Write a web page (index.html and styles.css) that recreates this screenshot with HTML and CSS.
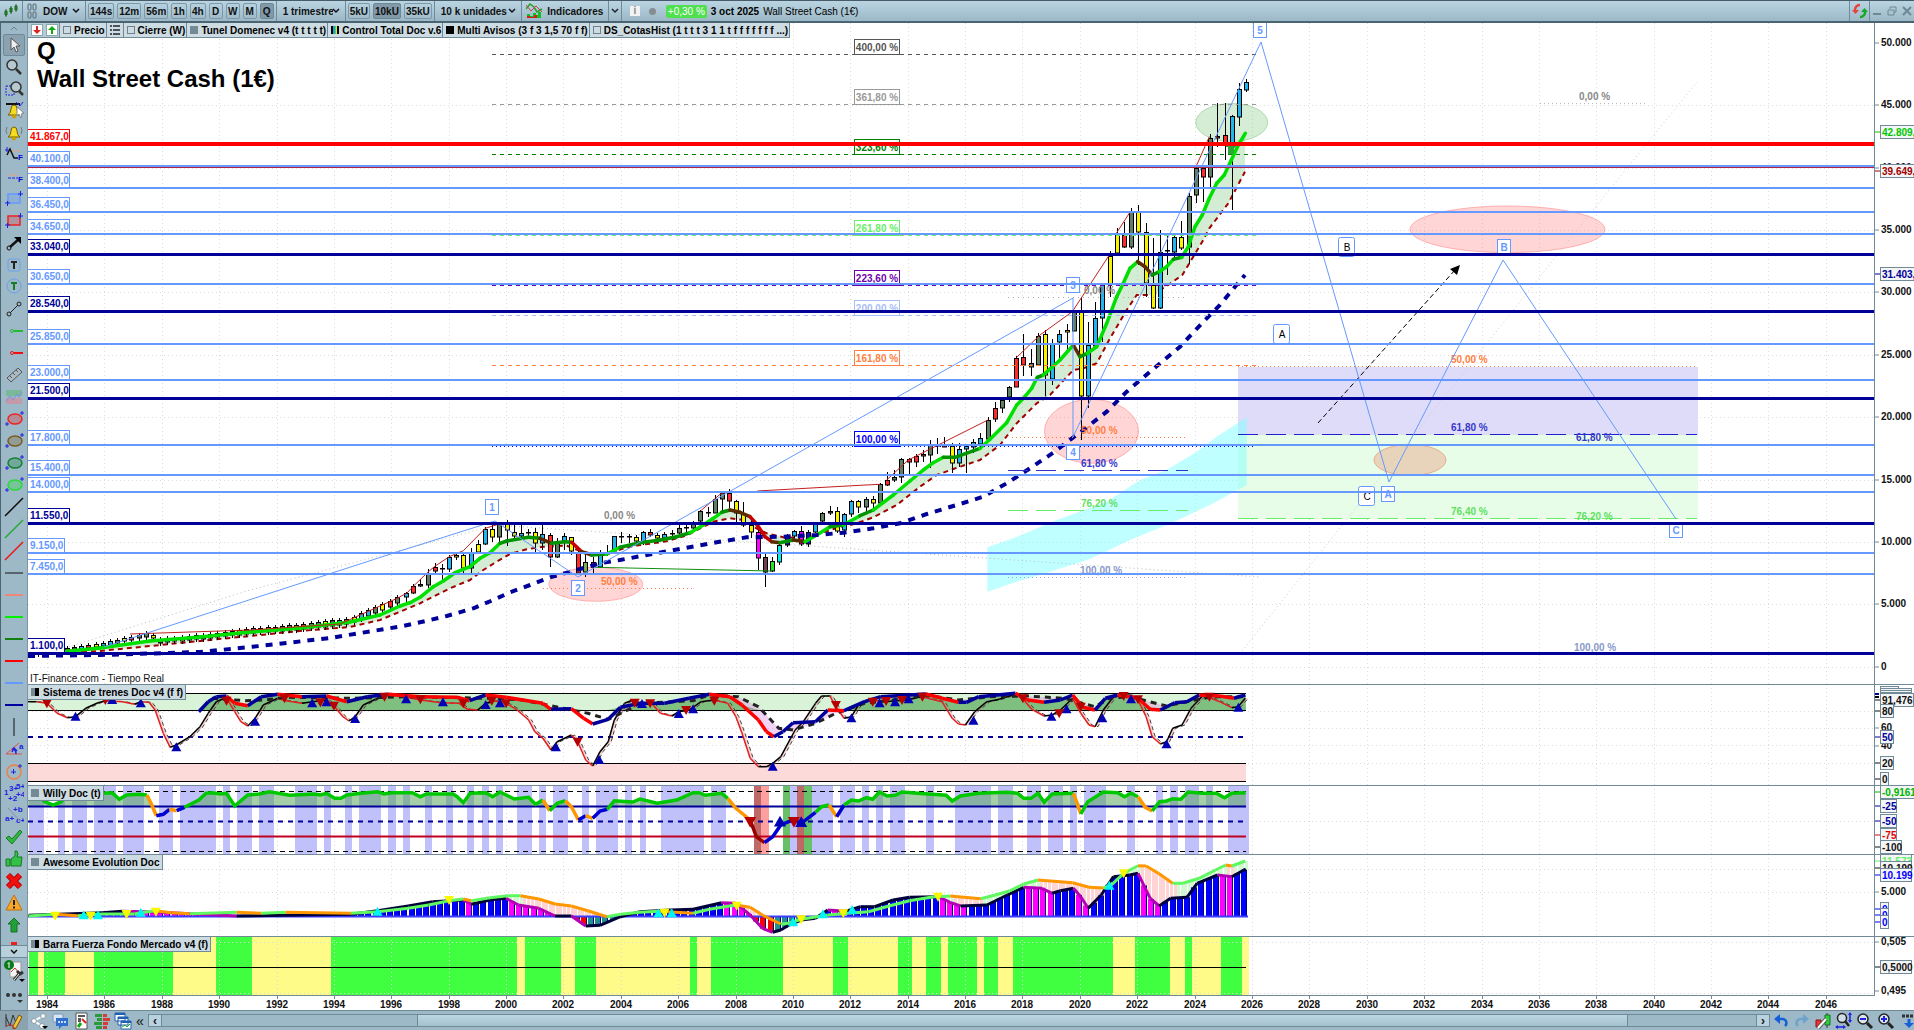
FILE: index.html
```html
<!DOCTYPE html>
<html lang="es">
<head>
    <meta charset="UTF-8">
    <meta name="viewport" content="width=device-width, initial-scale=1.0">
    <title>Wall Street Cash (1€)</title>
    <link rel="stylesheet" href="styles.css">
</head>
<body>

    <!-- Top bar -->
    <header class="topbar">
        <div class="cell logo">
            <svg width="18" height="18" viewBox="0 0 18 18"><path d="M4 7v8M9 4v8M14 2v8" stroke="#2a7a2a"/><path d="M3 9h2v4H3zM8 6h2v4H8zM13 4h2v4h-2z" fill="#2a9a2a" stroke="#186018"/></svg>
        </div>
        <div class="cell link">
            <svg width="10" height="16" viewBox="0 0 10 16" fill="none" stroke="#718894" stroke-width="1.5"><rect x="1" y="1" width="3" height="6" rx="1.5"/><rect x="6" y="1" width="3" height="6" rx="1.5"/><rect x="1" y="9" width="3" height="6" rx="1.5"/><rect x="6" y="9" width="3" height="6" rx="1.5"/></svg>
        </div>
        <div class="cell symbol">
            <select aria-label="Valor"><option>DOW</option></select>
        </div>
        <div class="cell frames">
            <button>144s</button>
            <button>12m</button>
            <button>56m</button>
            <button>1h</button>
            <button>4h</button>
            <button>D</button>
            <button>W</button>
            <button>M</button>
            <button class="active">Q</button>
        </div>
        <div class="cell period">
            <select aria-label="Periodo"><option>1 trimestre</option></select>
        </div>
        <div class="cell frames">
            <button>5kU</button>
            <button class="active">10kU</button>
            <button>35kU</button>
        </div>
        <div class="cell units">
            <select aria-label="Unidades"><option>10 k unidades</option></select>
        </div>
        <button class="cell indicators">
            <svg width="17" height="16" viewBox="0 0 17 16"><path d="M0 6L4 1l4 3 3 5 5-3" fill="none" stroke="#2aa02a" stroke-width="1.5"/><path d="M0 2l5 6 5-5 6 6" fill="none" stroke="#c44" stroke-width="1"/><path d="M1 15v-4h3v2h3v-3h3v2h2v-3h3v6z" fill="#10c020"/><path d="M1 15v-2h3v1h4v-2h3v3z" fill="#d02020"/></svg>
            Indicadores
        </button>
        <button class="cell more" aria-label="Más indicadores">
            <svg width="8" height="6" viewBox="0 0 8 6"><path d="M1 1l3 3 3-3" fill="none" stroke="#223" stroke-width="1.5"/></svg>
        </button>
        <div class="quote">
            <span class="info">i</span>
            <span class="dot"></span>
            <span class="change">+0,30 %</span>
            <strong>3 oct 2025</strong>
            <span>Wall Street Cash (1€)</span>
        </div>
        <button class="cell refresh" aria-label="Actualizar">
            <svg width="16" height="16" viewBox="0 0 16 16" fill="none" stroke-width="2.5"><path d="M8 2a5 5 0 0 0-5 6" stroke="#e8403c"/><path d="M0 7h7l-3.500 4z" fill="#e8403c"/><path d="M8 14a5 5 0 0 0 5-6" stroke="#18a828"/><path d="M9 9h7l-3.500-4z" fill="#18a828"/></svg>
        </button>
        <div class="window-buttons">
            <button aria-label="Minimizar"><svg width="10" height="10" viewBox="0 0 10 10"><path d="M1 8h8" stroke="#708894" stroke-width="2"/></svg></button>
            <button aria-label="Restaurar"><svg width="10" height="10" viewBox="0 0 10 10" fill="none" stroke="#708894"><path d="M3 3V1h6v5H7M1 4h6v5H1z"/></svg></button>
            <button aria-label="Cerrar"><svg width="10" height="10" viewBox="0 0 10 10"><path d="M1 1l8 8M9 1L1 9" stroke="#708894" stroke-width="2"/></svg></button>
        </div>
    </header>

    <div class="workspace">

        <!-- Drawing tools -->
        <nav class="sidebar" aria-label="Herramientas">
            <button class="scroll-up" aria-label="Subir"><svg width="8" height="5" viewBox="0 0 8 5"><path d="M1 4l3-3 3 3" fill="none" stroke="#6a8290"/></svg></button>
            <div class="tools" id="tools"></div>
            <button class="scroll-down" aria-label="Bajar"><svg width="8" height="5" viewBox="0 0 8 5"><path d="M1 1l3 3 3-3" fill="none" stroke="#111" stroke-width="1.500"/></svg></button>
            <button class="side-big" aria-label="Ajustes"><svg width="24" height="24" viewBox="0 0 24 24"><rect x="8" y="3" width="11" height="15" fill="#f4f4f4" stroke="#999"/><path d="M9 13l4-4 4 5" stroke="#c33" fill="none"/><path d="M12 21l5-6m-2-3 3 3 3-2" stroke="#333" stroke-width="3" fill="none"/><path d="M12 21l5-6" stroke="#eee"/><circle cx="7" cy="6" r="5" fill="#0a7a1a"/><path d="M5.500 5L7 3.500V9" stroke="#fff" fill="none"/><path d="M17 20h6l-3 3z"/></svg></button>
            <button class="side-big" aria-label="Más"><svg width="24" height="24" viewBox="0 0 24 24" fill="#333"><circle cx="6" cy="10" r="2"/><circle cx="12" cy="10" r="2"/><circle cx="18" cy="10" r="2"/><path d="M15 15h6l-3 3z"/></svg></button>
        </nav>

        <!-- Charts -->
        <main class="charts">
            <section class="pane">
                <ul class="legend">
                    <li class="arrows">
                        <svg width="12" height="12" viewBox="0 0 12 12"><rect x=".5" y=".5" width="11" height="11" fill="#fff" stroke="#8aa"/><path d="M6 2v4" stroke="#d22" stroke-width="2"/><path d="M2 6h8l-4 4z" fill="#d22"/></svg>
                        <svg width="12" height="12" viewBox="0 0 12 12"><rect x=".5" y=".5" width="11" height="11" fill="#fff" stroke="#8aa"/><path d="M6 10V6" stroke="#1a1" stroke-width="2"/><path d="M2 6h8L6 2z" fill="#1a1"/></svg>
                    </li>
                    <li><i class="swatch"></i>Precio</li>
                    <li class="list"><svg width="10" height="10" viewBox="0 0 10 10"><path d="M0 1h2M0 5h2M0 9h2M3 1h7M3 5h7M3 9h7" stroke="#223" stroke-width="1.500"/></svg></li>
                    <li><i class="swatch"></i>Cierre (W)</li>
                    <li><i class="swatch solid"></i>Tunel Domenec v4 (t t t t t)</li>
                    <li><i class="swatch stripes"></i>Control Total Doc v.6</li>
                    <li><i class="swatch black"></i>Multi Avisos (3 f 3 1,5 70 f f)</li>
                    <li><i class="swatch"></i>DS_CotasHist (1 t t t 3 1 1 t f f f f f f f ...)</li>
                </ul>
                <svg id="price" class="plot" viewBox="28 23 1886 661"></svg>
            </section>
            <section class="pane">
                <h2 class="tag"><i class="swatch half"></i>Sistema de trenes Doc v4 (f f)</h2>
                <svg id="trains" class="plot" viewBox="28 684 1886 101"></svg>
            </section>
            <section class="pane">
                <h2 class="tag"><i class="swatch solid"></i>Willy Doc (t)</h2>
                <svg id="willy" class="plot" viewBox="28 785 1886 69"></svg>
            </section>
            <section class="pane">
                <h2 class="tag"><i class="swatch solid"></i>Awesome Evolution Doc</h2>
                <svg id="awesome" class="plot" viewBox="28 854 1886 82"></svg>
            </section>
            <section class="pane">
                <h2 class="tag"><i class="swatch half"></i>Barra Fuerza Fondo Mercado v4 (f)</h2>
                <svg id="force" class="plot" viewBox="28 936 1886 74"></svg>
            </section>
        </main>
    </div>

    <!-- Bottom bar -->
    <footer class="bottombar">
        <button class="draw" aria-label="Dibujar"><svg width="20" height="18" viewBox="0 0 20 18"><path d="M2 2v13M2 5l4 9 3-11 3 8" stroke="#333" fill="none"/><path d="M9 14l6-11 3 2-6 11-3 1z" fill="#f2c53a" stroke="#7a5010"/><path d="M3 14q4-4 8 3" stroke="#c22" fill="none"/></svg></button>
        <button aria-label="Compartir"><svg width="18" height="18" viewBox="0 0 18 18"><path d="M13 4L4 9l8 5" stroke="#fff" stroke-width="2" fill="none"/><g fill="#fff" stroke="#8b9aa2"><circle cx="13" cy="4" r="2.500"/><circle cx="4" cy="9" r="2.500"/><circle cx="12" cy="14" r="2.500"/></g><path d="M12 14h6l-3 3z"/></svg></button>
        <button aria-label="Chat"><svg width="18" height="18" viewBox="0 0 18 18"><rect x="2" y="2" width="10" height="8" rx="1" fill="#d6e4f4" stroke="#7892bb"/><path d="M5 6h12v8h-6l-3 3v-3H5z" fill="#2f6fd0"/><path d="M7 10h2m1 0h2m1 0h2" stroke="#fff" stroke-width="1.500"/></svg></button>
        <button aria-label="Informe"><svg width="18" height="18" viewBox="0 0 18 18"><path d="M4 1h11v16H4z" fill="#fff" stroke="#555"/><path d="M6 4h7M6 7h3M6 9h3" stroke="#222" stroke-width="1.500"/><path d="M10 7l4 4" stroke="#d22" stroke-width="2"/><path d="M6 15l3-4" stroke="#1a1" stroke-width="3"/></svg></button>
        <button aria-label="Órdenes"><svg width="18" height="18" viewBox="0 0 18 18"><path d="M2 2h7v3H2zM4 6h5v3H4zM1 10h8v3H1zM3 14h6v3H3z" fill="#2a9a3a"/><path d="M10 2h4v3h-4zM10 6h7v3h-7zM10 10h5v3h-5zM10 14h4v3h-4z" fill="#d43c34"/></svg></button>
        <button aria-label="Ventanas"><svg width="18" height="18" viewBox="0 0 18 18" stroke="#2060b0"><path d="M1 1h10v8H1zM4 5h10v8H4zM7 9h10v8H7z" fill="#fff"/><path d="M1 2h10M4 6h10M7 10h10" stroke-width="2"/><path d="M8 15l3-2 2 2 3-3" stroke="#2a2" fill="none"/></svg></button>
        <button class="collapse" aria-label="Plegar">«</button>
        <div class="scrollbar">
            <button aria-label="Izquierda">‹</button>
            <div class="track"><div class="thumb"></div></div>
            <button aria-label="Derecha">›</button>
        </div>
        <div class="zoom">
            <button aria-label="Deshacer"><svg width="16" height="16" viewBox="0 0 16 16"><path d="M5 6h5a4 4 0 0 1 2 7" stroke="#1560d8" stroke-width="2.500" fill="none"/><path d="M7 1v10L1 6z" fill="#1560d8"/></svg></button>
            <button aria-label="Rehacer"><svg width="16" height="16" viewBox="0 0 16 16"><path d="M11 6H6a4 4 0 0 0-2 7" stroke="#6fa3cc" stroke-width="2.500" fill="none"/><path d="M9 1v10l6-5z" fill="#6fa3cc"/></svg></button>
            <button aria-label="Configurar"><svg width="18" height="18" viewBox="0 0 18 18"><path d="M5 8v7M13 1v15" stroke="#333"/><path d="M11 3h5v10h-5z" fill="#2ad040" stroke="#187020"/><path d="M2 8h5v7H2z" fill="#e33" stroke="#811"/><path d="M4 16l8-9" stroke="#555" stroke-width="4"/><path d="M4 16l8-9" stroke="#fff" stroke-width="2"/></svg></button>
            <button aria-label="Zoom libre"><svg width="18" height="18" viewBox="0 0 18 18"><circle cx="7" cy="6" r="4.500" fill="#cfdde4" stroke="#222" stroke-width="1.500"/><path d="M10 9l4 5" stroke="#222" stroke-width="2.500"/><path d="M15 1v9M1 15h9" stroke="#22d" stroke-width="1.500"/><path d="M13 3l2-3 2 3zM13 8l2 3 2-3zM3 13l-3 2 3 2zM8 13l3 2-3 2z" fill="#22d"/></svg></button>
            <button aria-label="Alejar"><svg width="18" height="18" viewBox="0 0 18 18"><circle cx="7" cy="7" r="5" fill="#dce6ea" stroke="#222" stroke-width="1.500"/><path d="M11 11l5 5" stroke="#222" stroke-width="3"/><path d="M4 7h6" stroke="#22d" stroke-width="2"/></svg></button>
            <button aria-label="Acercar"><svg width="18" height="18" viewBox="0 0 18 18"><circle cx="7" cy="7" r="5" fill="#dce6ea" stroke="#222" stroke-width="1.500"/><path d="M11 11l5 5" stroke="#222" stroke-width="3"/><path d="M4 7h6M7 4v6" stroke="#22d" stroke-width="2"/></svg></button>
            <button aria-label="Mostrar"><svg width="18" height="18" viewBox="0 0 18 18"><path d="M4 4h14" stroke="#333" stroke-width="3" stroke-dasharray="3 1"/><path d="M11 7v5" stroke="#1560d8" stroke-width="3"/><path d="M6 11h10l-5 5z" fill="#1560d8"/></svg></button>
        </div>
    </footer>

    <script src="chart.js"></script>
</body>
</html>
```
FILE: styles.css
```css
* {
    box-sizing: border-box;
}

body {
    margin: 0;
    min-height: 100vh;
    display: flex;
    flex-direction: column;
    font-family: "Liberation Sans", Arial, sans-serif;
    font-size: 10px;
    color: #000;
    background: #9db9c7;
}

button, select {
    font: inherit;
    font-weight: bold;
    color: #111;
    background: none;
    border: 0;
    padding: 0;
    margin: 0;
}

svg {
    display: block;
    flex: none;
}

/* top bar */
.topbar {
    display: flex;
    height: 23px;
    border-top: 1px solid #465c6a;
    border-bottom: 2px solid #4a6472;
    background: linear-gradient(#bad4e2, #9cb8c6);
}

.cell {
    display: flex;
    align-items: center;
    justify-content: center;
    border-right: 1px solid #708c9a;
}

.logo {
    width: 23px;
}

.link {
    width: 17px;
    border-right: 0;
}

.symbol {
    width: 46px;
}

.period {
    width: 69px;
}

.units {
    width: 87px;
}

.cell select {
    width: 100%;
    padding: 0 12px 0 3px;
    appearance: none;
    background: url("data:image/svg+xml,%3Csvg xmlns='http://www.w3.org/2000/svg' width='8' height='6'%3E%3Cpath d='M1 1l3 3 3-3' fill='none' stroke='%23112' stroke-width='1.5'/%3E%3C/svg%3E") no-repeat right 5px center;
}

.period select, .units select {
    padding-left: 6px;
}

.frames {
    gap: 3px;
    padding: 0 2px;
}

.frames button {
    height: 16px;
    min-width: 14px;
    padding: 0 1px;
    border: 1px solid #7d98a6;
    border-radius: 2px;
}

.frames .active {
    background: #8199a8;
    border-color: #6d8794;
}

.indicators {
    width: 87px;
    gap: 4px;
}

.more {
    width: 13px;
}

.quote {
    flex: 1;
    display: flex;
    align-items: center;
    gap: 4px;
    padding-left: 8px;
}

.info {
    width: 10px;
    height: 10px;
    line-height: 10px;
    text-align: center;
    font-weight: bold;
    color: #8a8a8a;
    background: #f2f2f2;
}

.dot {
    width: 7px;
    height: 7px;
    margin: 0 6px 0 5px;
    border-radius: 50%;
    background: #858d92;
}

.change {
    padding: 0 2px;
    line-height: 13px;
    border-radius: 2px;
    color: #fff;
    background: #4fdf4f;
}

.refresh {
    width: 21px;
    border-left: 1px solid #708c9a;
}

.window-buttons {
    width: 44px;
    display: flex;
    align-items: center;
    justify-content: space-around;
}

/* side bar */
.workspace {
    display: flex;
    flex: 1;
    align-items: stretch;
}

.sidebar {
    width: 28px;
    flex: none;
    display: flex;
    flex-direction: column;
    background: #9db9c7;
    border-left: 1px solid #4a6472;
    border-right: 1px solid #7c96a4;
}

.sidebar button {
    display: flex;
    align-items: center;
    justify-content: center;
}

.scroll-up {
    height: 11px;
}

.tools {
    flex: 1 1 0;
    overflow: hidden;
    display: flex;
    flex-direction: column;
}

.tools button {
    flex: none;
    height: 22px;
    margin: 0 2px;
    border-radius: 2px;
}

.tools button:first-child {
    background: #8ba3b1;
    border: 1px solid #6f8997;
}

.scroll-down {
    height: 13px;
    border-top: 1px solid #6f8997;
    border-bottom: 1px solid #6f8997;
    background: #b8d0dc;
}

.sidebar .side-big {
    height: 26px;
}

/* charts */
.charts {
    flex: 1;
    min-width: 0;
    background: #fff;
}

.pane {
    position: relative;
}

.plot {
    width: 100%;
    height: auto;
}

.plot text {
    font-size: 10px;
    font-weight: bold;
}

.plot .title {
    font-size: 24px;
}

.plot .plain {
    font-weight: normal;
}

.legend {
    position: absolute;
    top: 0;
    left: 0;
    display: flex;
    margin: 0;
    padding: 0;
    list-style: none;
    border-bottom: 1px solid #708a98;
}

.legend li {
    display: flex;
    align-items: center;
    height: 14px;
    gap: 3px;
    padding: 0 1px 0 3px;
    font-weight: bold;
    white-space: nowrap;
    border-right: 1px solid #708a98;
    background: #cddbe2;
}

.legend .arrows {
    background: #b5cbd6;
}

.legend .list {
    padding: 0 3px;
}

.swatch {
    width: 8px;
    height: 8px;
    border: 1px solid #708090;
}

.swatch.solid {
    background: #748b96;
    border-color: #748b96;
}

.swatch.black {
    background: #000;
    border-color: #000;
}

.swatch.half {
    border: 0;
    background: linear-gradient(90deg, #748b96 50%, #000 50%);
}

.swatch.stripes {
    border: 0;
    background: linear-gradient(90deg, #000 25%, #29d 25% 50%, #4d4 50% 65%, #ee0 65% 80%, #000 80%);
}

.tag {
    position: absolute;
    top: 0;
    left: 0;
    display: flex;
    align-items: center;
    gap: 4px;
    height: 16px;
    margin: 0;
    padding: 0 2px 0 3px;
    font-size: 10px;
    background: #cddbe2;
    border: 1px solid #708a98;
    border-left: 0;
}

/* bottom bar */
.bottombar {
    display: flex;
    align-items: stretch;
    height: 20px;
    border-top: 1px solid #6f8997;
    background: #9db9c7;
}

.bottombar button {
    display: flex;
    width: 21px;
    align-items: center;
    justify-content: center;
}

.bottombar .draw {
    width: 28px;
    background: #8ba3b1;
}

.bottombar .collapse {
    width: 14px;
    font-size: 14px;
    font-weight: normal;
}

.scrollbar {
    flex: 1;
    display: flex;
    margin: 3px 0 3px 1px;
    border: 1px solid #6f8997;
}

.scrollbar button {
    width: 12px;
    background: #b8d2df;
    font-size: 12px;
}

.track {
    flex: 1;
    display: flex;
    border: 1px solid #6f8997;
    border-width: 0 1px;
}

.thumb {
    width: 76%;
    margin-left: 16%;
    background: linear-gradient(#bcd6e2, #a5c1ce);
    border: 1px solid #6f8997;
    border-width: 0 1px;
}

.zoom {
    width: 144px;
    display: flex;
    overflow: hidden;
}

.zoom button {
    flex: none;
}
```
FILE: chart.js
```js
const RIGHT = 1875;      // x of the price axis
const LAST = 1246;       // x of the last bar
const NAVY = '#000099';
const SKY = '#6699ff';
const GRID = '#dcdcdc';

const yearX = y => 47 + 28.69 * (y - 1984);
const priceY = p => 666.8 - p * 0.01248;

// readers for the point lists: each frame has its own origin and units
function frame(ox, oy, sx, sy) {
    return s => s.trim().split(/\s+/).map(p => {
        const [x, y] = p.split(',').map(Number);
        return [Math.round((ox + x / sx) * 10) / 10, Math.round((oy + y / sy) * 10) / 10];
    });
}
const early = frame(0, 0, 1, 1);
const mid = frame(400, 380, 3, 3);
const late = frame(840, 320, 3, 3);
const top3 = frame(840, 20, 3, 3);
const lo = frame(0, 670, 2.45, 3);
const hi = frame(640, 670, 2.45, 3);

const line = (x1, y1, x2, y2, c, w = 1, dash = '') =>
    `<line x1="${x1}" y1="${y1}" x2="${x2}" y2="${y2}" stroke="${c}" stroke-width="${w}"${dash ? ` stroke-dasharray="${dash}"` : ''}/>`;
const rect = (x, y, w, h, fill, stroke = 'none', rx = 0) =>
    `<rect x="${x}" y="${y}" width="${w}" height="${h}" fill="${fill}" stroke="${stroke}" rx="${rx}"/>`;
const poly = (pts, c, w = 1, dash = '') =>
    `<polyline points="${pts.join(' ')}" fill="none" stroke="${c}" stroke-width="${w}"${dash ? ` stroke-dasharray="${dash}"` : ''}/>`;
const area = (pts, fill) => `<polygon points="${pts.join(' ')}" fill="${fill}"/>`;
const text = (x, y, s, c = '#111', cls = '', anchor = 'start') =>
    `<text x="${x}" y="${y}" fill="${c}" class="${cls}" text-anchor="${anchor}">${s}</text>`;
const ellipse = (cx, cy, rx, ry, c) =>
    `<ellipse cx="${cx}" cy="${cy}" rx="${rx}" ry="${ry}" fill="${c}" fill-opacity=".35" stroke="${c}" stroke-opacity=".6"/>`;

function triangles(pts, up, c, r = 5) {
    const d = up ? -r : r;
    return pts.map(([x, y]) => area([[x - r, y - d * 0.8], [x + r, y - d * 0.8], [x, y + d]], c)).join('');
}

// a line whose colour depends on the direction of each step
function turning(pts, rising, falling, w) {
    let out = '';
    for (let i = 1; i < pts.length; i++) {
        out += poly([pts[i - 1], pts[i]], pts[i][1] > pts[i - 1][1] ? falling : rising, w);
    }
    return out;
}

function valueAt(pts, x) {
    for (let i = 1; i < pts.length; i++) {
        if (x <= pts[i][0]) {
            const [a, b] = [pts[i - 1], pts[i]];
            return a[1] + (b[1] - a[1]) * (x - a[0]) / (b[0] - a[0] || 1);
        }
    }
    return pts[pts.length - 1][1];
}

function grid(y1, y2, rows) {
    let out = '';
    for (let y = 1984; y <= 2046; y += 2) out += line(Math.round(yearX(y)) + 0.5, y1, Math.round(yearX(y)) + 0.5, y2, GRID, 1, '1 3');
    rows.forEach(r => out += line(28, r + 0.5, RIGHT, r + 0.5, GRID, 1, '1 3'));
    return out;
}

function axisTag(y, s, c, w, h = 13) {
    return line(RIGHT, y, RIGHT + 5, y, c, 1) + rect(RIGHT + 5.5, Math.round(y) - 6.5, w, h, '#f4f5f6', '#708a98') + text(RIGHT + 7, Math.round(y) + 4, s, c);
}
const axisText = (y, s) => line(RIGHT, y, RIGHT + 4, y, '#708a98') + text(RIGHT + 6, y + 3, s);
const axis = (y1, y2) => line(RIGHT - 0.5, y1, RIGHT - 0.5, y2, '#708a98') + line(28, y1 + 0.5, 1914, y1 + 0.5, '#708a98');

/* ---------- price ---------- */

const candleColors = {
    b: '#22b4ee', y: '#f8f400', r: '#ff2a2a', g: '#5f7f63', k: '#555', m: '#ff00ff',
    n: '#1414b4', c: '#00f0f0', l: '#20e820', w: '#70404e', G: '#78b04c'
};
// high, top, bottom, low, colour: one row per quarter
const candles1 = `636,640,650,668,b 612,619,640,642,r 596,612,618,622,k 568,580,614,625,g 550,562,574,578,r 552,563,565,600,k
525,532,566,575,b 520,526,532,540,y 515,526,565,585,y 505,515,565,578,b 480,493,515,520,y 440,448,493,495,b 435,448,472,485,y
430,433,472,490,g 420,430,450,497,y 435,455,468,480,y 430,460,468,475,b 448,457,460,475,k 445,457,490,520,y 435,463,490,510,b
460,466,530,560,r 475,483,530,535,g 458,469,484,510,b 470,472,514,525,y 505,515,578,580,r 520,547,577,592,G 530,547,562,585,r
510,523,560,565,b 495,515,522,527,b 467,469,514,516,b 455,468,470,490,k 462,469,471,490,k 465,470,484,490,y 452,457,486,495,b
447,457,466,470,r 460,465,474,490,y 457,463,475,478,b 450,460,463,480,k 435,445,460,465,g 430,440,443,460,k 422,430,443,455,g
390,394,424,426,g 380,395,398,410,k 345,358,398,400,g 335,340,358,395,g 328,340,364,385,r 360,364,400,425,y 365,400,436,440,y
420,436,455,475,y 450,455,533,570,m 520,532,576,620,w 530,544,574,576,l 492,495,545,555,c 463,468,496,500,n 450,454,468,480,b
438,454,492,497,m 450,457,493,500,n 425,430,457,460,b 395,400,424,426,g 378,394,400,405,k 380,394,452,460,y 398,403,450,470,b
360,363,403,410,b 360,364,380,400,y`;
const candles2 = `530,538,560,575,g 528,538,550,575,y 490,493,550,552,g 457,481,494,498,r 450,472,480,487,g 415,418,472,490,g
415,418,425,465,r 403,408,425,440,r 390,403,408,425,r 360,374,404,445,g 355,375,377,403,k 352,374,380,382,r 370,379,430,458,y
368,388,430,440,b 375,378,388,458,b 358,367,380,400,b 340,355,373,380,b 292,301,356,358,g 247,265,296,305,r 235,240,265,278,g
198,202,232,245,g 108,115,200,202,r 42,112,136,168,r 87,130,140,168,g 38,48,136,138,g 30,43,166,228,y 57,73,177,195,b
30,43,65,118,b 12,31,37,90,y -30,-25,32,34,g -65,-27,227,360,y 5,75,227,265,b -55,-5,77,88,b -110,-105,-5,65,b`;
const candles3 = `693,707,792,830,y 625,645,700,702,y 605,646,680,685,r 563,577,680,687,g 555,573,635,735,y 608,635,790,830,y
655,796,863,868,y 630,697,865,868,b 648,690,692,765,k 645,652,695,720,b 603,652,685,690,y 520,529,680,732,g 438,443,526,550,g
440,443,472,545,r 343,355,472,500,g 250,347,355,380,r 250,346,370,420,r 285,289,380,570,b 190,208,290,318,b 178,187,209,215,b`;

const average = early('28,653 60,652 100,648 150,641 200,637 250,632 300,628 350,622 380,615')
    .concat(mid(`0,678 30,668 60,652 100,620 130,603 165,578 210,560 240,535 270,518 300,490 320,483 385,472 420,475 455,490 495,485
        515,487 545,515 575,525 620,522 660,502 720,488 780,480 830,470 870,458 910,435 940,415 965,397 990,390 1020,397 1050,410
        1072,435 1095,470 1115,485 1140,488 1180,480 1215,485 1250,465 1290,440 1330,435 1380,407`))
    .concat(late(`100,570 160,525 210,483 250,450 280,428 310,412 345,412 420,385 450,358 500,308 530,255 550,235 575,205
        592,172 610,165 660,120 700,75 720,110 742,100 770,80`))
    .concat(top3(`800,910 830,830 850,790 870,745 893,725 915,740 937,765 958,755 980,740 1000,718 1025,712 1045,680 1065,620
        1087,585 1108,535 1130,490 1153,465 1174,420 1195,375 1216,340`));
const slowAverage = early('28,654 100,651 200,641 300,631 350,627 380,620')
    .concat(mid(`5,693 60,670 150,625 210,600 250,570 290,545 330,522 380,508 430,500 500,497 545,515 600,525 700,498 800,484
        860,466 940,425 990,415 1030,420 1060,440 1100,460 1150,472 1220,475 1290,450 1370,430`))
    .concat(late('100,592 170,555 240,500 290,465 340,447 420,420 480,375 530,310 590,250 630,225 700,150 730,145 770,130'))
    .concat(top3('810,955 860,870 890,825 935,825 985,795 1027,765 1045,735 1090,660 1108,625 1165,550 1215,455'));
const longAverage = early('28,656 100,655 200,652 260,646 330,638')
    .concat(mid('10,738 60,727 140,708 220,685 280,660 330,637 390,615 450,592 520,573 600,550 660,540 740,525 850,505 950,487 1040,472 1150,470 1250,465'))
    .concat(late('10,638 100,625 180,610 260,582 360,552 430,530 500,490 570,445 640,398 700,352 730,330 800,275 860,215 930,155 1020,80'))
    .concat(top3('1095,900 1140,855 1185,800 1215,765'));

function candle(x, h, t, b, l, c) {
    x = Math.round(x);
    t = Math.round(t);
    b = Math.max(Math.round(b), t + 1);
    return line(x + 0.5, Math.round(h), x + 0.5, Math.round(l), '#000') + rect(x - 1.5, t + 0.5, 4, b - t - 0.5, candleColors[c], '#000');
}

function drawCandles() {
    let out = '';
    const path = early('28,653 47,652 75,648 110,643 150,634 158,641 200,637 250,631 300,627 350,621 375,610 400,599');
    const mix = 'gybgrykbgyrb';
    let n = 0;
    for (let x = 31; x < 402; x += 7.17) {
        const y = valueAt(path, x);
        const s = 1 + x / 200;
        out += candle(x, y - s - 2, y - s, y + s, y + s + 3, mix[(n++ * 5) % 12]);
    }
    let x = 406;
    [[candles1, 380], [candles2, 320], [candles3, 20]].forEach(([rows, y0]) => {
        rows.split(/\s+/).forEach(r => {
            const v = r.split(',');
            out += candle(x, y0 + v[0] / 3, y0 + v[1] / 3, y0 + v[2] / 3, y0 + v[3] / 3, v[4]);
            x += 7.18;
        });
    });
    return out;
}

function drawAverage() {
    let out = '';
    for (let i = 1; i < average.length; i++) {
        const [a, b] = [average[i - 1], average[i]];
        const slope = (a[1] - b[1]) / (b[0] - a[0]);
        let c = slope > 0.5 || b[0] < 500 ? '#00e000' : '#009400';
        if (slope < -0.1) c = slope < -0.6 && b[0] < 900 ? '#c80000' : '#5a2a00';
        out += `<polyline points="${a} ${b}" stroke="${c}" stroke-width="3.500" stroke-linecap="round"/>`;
    }
    return out;
}

const levels = [
    [41867, '41.867,0', '#ff0000', 4], [40100, '40.100,0', SKY, 2], [38400, '38.400,0', SKY, 2], [36450, '36.450,0', SKY, 2],
    [34650, '34.650,0', SKY, 2], [33040, '33.040,0', NAVY, 3], [30650, '30.650,0', SKY, 2], [28540, '28.540,0', NAVY, 3],
    [25850, '25.850,0', SKY, 2], [23000, '23.000,0', SKY, 2], [21500, '21.500,0', NAVY, 3], [17800, '17.800,0', SKY, 2],
    [15400, '15.400,0', SKY, 2], [14000, '14.000,0', SKY, 2], [11550, '11.550,0', NAVY, 3], [9150, '9.150,0', SKY, 2],
    [7450, '7.450,0', SKY, 2], [1100, '1.100,0', NAVY, 3]
];

const fibs = [
    [54, '400,00 %', '#555'], [104, '361,80 %', '#999'], [154, '323,60 %', '#008000'], [235, '261,80 %', '#66f066'],
    [285, '223,60 %', '#7000b0'], [315, '200,00 %', '#a9bdf8'], [365, '161,80 %', '#ff8040'], [446, '100,00 %', '#0000ff']
];

function drawPrice() {
    const rows = [];
    for (let p = 0; p <= 45000; p += 5000) rows.push(Math.round(priceY(p)));
    let out = grid(23, 684, rows);

    // projected zones
    out += rect(1238, 367, 460, 68, '#dedcf8') + rect(1238, 435, 460, 84, '#e8fde8');
    out += area(late(`442,682 520,655 650,600 800,545 900,480 980,450 1070,395 1130,350 1220,292 1220,495 1120,550 1000,607
        870,660 750,717 630,755 530,785 442,815`), 'rgba(128,255,255,.5)');
    out += ellipse(595.8, 584.3, 47, 17, '#ff8888') + ellipse(1091.5, 431.3, 47, 32, '#ff8888') + ellipse(1231.7, 122.5, 36, 19, '#88c888');
    out += ellipse(1507.5, 229.3, 97.5, 23.3, '#ff8888') + ellipse(1410, 460, 36, 15.5, '#e88868');
    out += poly([[1242, 651], [1601, 200], [1697, 82]], '#ccc', 1, '1 3');
    out += poly([[495, 525], [840, 548], [1260, 577]], '#bbb', 1, '1 3') + poly([[65, 648], [250, 590], [485, 528]], '#bbb', 1, '1 3');

    // averages
    out += area(average.concat(slowAverage.slice().reverse()), 'rgba(140,205,140,.38)');
    out += poly(slowAverage, '#a00000', 2, '5 4') + drawCandles() + drawAverage();
    out += poly(longAverage, NAVY, 4, '7 7');
    out += rect(1228, 147, 6, 7, '#2aa83a') + rect(1226, 144, 10, 3, '#2aa83a');

    // tops and bottoms
    [mid('0,650 20,640 40,619 82,578 103,560 148,530 190,512 256,445 298,432'), mid('902,392 964,340 1000,335'),
        mid('1072,333 1380,316 1440,313'), late('139,481 205,420 442,301'), late('530,112 600,45 697,-25'),
        top3('697,875 808,705'), top3('829,640 871,575'), top3('1068,440 1108,350')].forEach(p => out += poly(p, '#c02020'));
    out += poly(early('130,634 250,630 340,624 400,597'), '#c02020') + poly(mid('585,562 1115,573'), '#109010');

    // fibonacci
    fibs.forEach(([y, s, c]) => {
        out += line(492, y + 0.5, 1256, y + 0.5, c, 1, c === '#0000ff' ? '1 3' : '4 4');
        out += rect(854.5, y - 14.5, 45, 15, '#fff', c) + text(877, y - 3, s, c, '', 'middle');
    });
    [[543, 692, 588, '#ff8040', '1 3'], [1008, 1185, 297, '#aaa', '1 4'], [1012, 1185, 437, '#ff8040', '1 3'], [1008, 1188, 470, '#3333cc', '20 8'],
        [1008, 1188, 510, '#66ee66', '20 8'], [1008, 1185, 577, '#9aa8e0', '1 3'], [1238, 1697, 366, '#ff8040', '1 3'],
        [1238, 1697, 434, '#2020d0', '20 8'], [1238, 1697, 518, '#66ee66', '20 8'], [1540, 1645, 103, '#bbb', '1 3'],
        [1540, 1645, 652, '#9aa8e0', '1 3']].forEach(([a, b, y, c, d]) => out += line(a, y + 0.5, b, y + 0.5, c, 1, d));
    [[604, 519, '0,00 %', '#888'], [601, 585, '50,00 %', '#ff8040'], [1084, 294, '0,00 %', '#888'], [1081, 434, '50,00 %', '#ff8040'],
        [1081, 467, '61,80 %', '#3838c8'], [1081, 507, '76,20 %', '#60e060'], [1080, 574, '100,00 %', '#8899cc'],
        [1451, 363, '50,00 %', '#ff8040'], [1451, 431, '61,80 %', '#3838c8'], [1576, 441, '61,80 %', '#3838c8'],
        [1451, 515, '76,40 %', '#60e060'], [1576, 520, '76,20 %', '#60e060'], [1579, 100, '0,00 %', '#888'],
        [1574, 651, '100,00 %', '#8899cc']].forEach(([x, y, s, c]) => out += text(x, y, s, c));

    // wave count
    [[485, 499, '1'], [571, 580, '2'], [1066, 277, '3'], [1066, 444, '4'], [1253, 22, '5'], [1381, 486, 'A'], [1497, 239, 'B'], [1669, 522, 'C']]
        .forEach(([x, y, s]) => out += rect(x + 0.5, y + 0.5, 13, 15, '#fff', SKY) + text(x + 7, y + 12, s, SKY, '', 'middle'));
    [[1273, 324, 'A'], [1338, 237, 'B'], [1358, 486, 'C']]
        .forEach(([x, y, s]) => out += rect(x + 0.5, y + 0.5, 16, 19, '#fff', SKY, 2) + text(x + 9, y + 14, s, '#000', 'plain', 'middle'));
    out += poly([[104, 647], [400, 551], [495, 521], [578, 577], [860, 418], [1073, 298], [1073, 437], [1261, 42], [1389, 482], [1503, 260], [1676, 519]], SKY);
    out += line(1318, 423, 1455, 270, '#000', 1, '5 3') + area([[1460, 265], [1450, 269], [1457, 275]], '#000');

    // levels
    levels.forEach(([p, s, c, w]) => {
        const y = Math.round(priceY(p));
        const boxW = p < 10000 ? 37 : 42;
        out += rect(27.5, y - 14.5, boxW, 14, '#fff', c) + text(30, y - 4, s, c);
        out += rect(28, y - (w >> 1), RIGHT - 28, w, c);
    });
    out += line(28, 167.5, RIGHT, 167.5, '#b02040');

    out += text(37, 59, 'Q', '#000', 'title') + text(37, 87, 'Wall Street Cash (1€)', '#000', 'title');
    out += text(30, 682, 'IT-Finance.com - Tiempo Real', '#111', 'plain');

    out += rect(RIGHT, 23, 39, 661, '#fff') + line(RIGHT - 0.5, 23, RIGHT - 0.5, 684, '#708a98');
    for (let p = 0; p <= 50; p += 5) out += axisText(Math.round(priceY(p * 1000)), p ? p + '.000' : '0');
    out += axisTag(132, '42.809,2', '#00c800', 44) + axisTag(171, '39.649,7', '#a00000', 44) + axisTag(274, '31.403,6', NAVY, 44);
    document.getElementById('price').innerHTML = out;
}

/* ---------- trains ---------- */

function drawTrains() {
    const fast = lo(`68,95 90,95 115,100 140,130 165,143 185,140 210,115 240,98 260,92 300,95 330,103 345,95 365,97 380,120 400,190
        417,232 432,225 465,200 490,170 510,130 530,95 550,85 560,95 575,125 590,155 607,168 625,145 645,105 680,85 700,92 740,100
        765,95 800,90 820,110 840,140 855,153 870,140 890,105 920,88 950,75 990,80 1030,90 1080,98 1125,100 1145,118 1170,120 1190,100
        1210,92 1240,100 1265,118 1295,150 1310,185 1330,205 1350,240 1365,215 1400,195 1415,215 1435,270 1452,288 1470,245 1490,215
        1505,150 1530,100 1550,90`)
        .concat(hi(`0,100 30,102 50,130 78,138 95,125 120,120 150,95 180,90 215,100 235,140 250,190 270,265 290,290 310,290 325,280
        345,260 380,180 400,155 430,100 445,78 465,78 480,110 500,145 518,140 535,105 560,90 600,95 650,90 690,80 740,95 765,145
        780,162 797,165 820,125 850,95 880,88 920,72 940,90 960,118 990,138 1010,135 1030,120 1060,85 1080,130 1100,165 1115,170
        1135,120 1160,80 1200,75 1220,90 1240,140 1255,200 1275,222 1290,215 1305,175 1328,165 1350,115 1380,75 1420,95 1450,113
        1465,110 1483,85`));
    const slow = lo(`487,125 510,95 530,80 555,78 575,100 607,107 640,80 680,73 740,80 800,78 850,95 900,80 950,73 1030,80 1120,82
        1150,92 1190,75 1240,82 1330,100 1350,118 1400,116 1430,145 1452,162 1490,148 1520,112`)
        .concat(hi(`0,100 60,100 120,85 170,73 220,80 250,105 290,150 310,185 328,200 350,185 375,158 430,155 460,120 500,122 550,95
        590,80 700,72 740,85 780,97 800,97 830,80 920,70 950,90 990,97 1030,90 1060,75 1085,112 1115,120 1140,85 1170,75 1220,85
        1250,118 1275,120 1310,98 1340,95 1370,75 1420,78 1455,85 1483,75`));
    const signal = lo('520,85 600,92 650,90 700,82 860,85 1000,80 1200,85 1280,90 1380,115 1440,130 1490,148 1530,125')
        .concat(hi(`0,100 130,92 170,75 240,80 290,110 340,175 375,180 430,160 480,130 550,100 620,90 700,75 780,90 860,80 950,78
        1040,85 1115,110 1150,85 1200,80 1290,108 1400,80 1480,80`));
    let out = grid(684, 785, [711, 728, 745, 763]);
    out += rect(28, 693, LAST - 28, 17, '#d8f3d8') + rect(28, 763, LAST - 28, 18, '#fddada');
    const floor = slow.map(([x, y]) => [x, Math.min(y, 710)]);
    out += area([[slow[0][0], 710], ...floor, [LAST, 710]], '#7fbf7f');
    out += area(slow.slice(23).concat(signal.slice(10).reverse()), 'rgba(220,130,220,.35)');
    [693, 710, 763, 781].forEach(y => out += line(28, y + 0.5, LAST, y + 0.5, '#000'));
    out += line(28, 737, LAST, 737, NAVY, 2, '5 5');
    out += area(fast.concat(fast.map(([x, y]) => [x + 3, y]).reverse()), 'rgba(230,120,120,.3)');
    out += poly(fast.map(([x, y]) => [x + 3, y]), '#444', 1, '4 3');
    out += turning(fast, '#000', '#e02020', 1.5) + poly(signal, '#222', 3, '6 5') + turning(slow, NAVY, '#ff0000', 3.5);
    out += triangles(lo(`185,140 275,90 345,100 432,232 625,155 765,100 800,97 870,147 995,88 1085,97 1190,105 1225,100 1362,232 1468,270`)
        .concat(hi('5,102 95,132 130,118 325,290 518,145 587,100 625,97 658,88 817,152 1008,140 1045,118 1133,145 1203,88 1290,223 1466,113')), true, '#0000b4');
    out += triangles(lo('115,100 258,90 555,92 697,85 785,97 818,107 942,80 1030,88 1135,100 1205,92 1240,100 1415,215 1555,98')
        .concat(hi('25,100 113,120 182,92 480,105 570,95 603,93 642,90 692,80 938,85 1027,130 1080,110 1185,78 1220,88 1395,80')), false, '#b40000');
    out += axis(684, 785);
    [686, 688, 690, 692].forEach((y, i) => out += rect(RIGHT + 5.5, y + 0.5, i ? 31 : 18, 10, '#f4f5f6', '#708a98'));
    out += line(RIGHT, 694, RIGHT + 4, 694, NAVY, 2) + line(RIGHT, 697, RIGHT + 4, 697, '#000', 2);
    out += axisText(728, '60') + axisText(746, '40') + axisTag(700, '91,476', '#111', 33) + axisTag(711, '80', '#111', 13);
    out += axisTag(737, '50', NAVY, 13) + axisTag(763, '20', '#111', 13) + axisTag(779, '0', '#111', 8);
    document.getElementById('trains').innerHTML = out;
}

/* ---------- willy ---------- */

function drawWilly() {
    const bands = lo(`70,108 142,159 176,213 230,284 301,353 390,424 441,530 546,563 581,617 635,671 723,777 794,811 845,862 880,933
        951,970 987,1004 1040,1056 1093,1110 1144,1161 1180,1197 1214,1231 1267,1303 1321,1338 1355,1392 1426,1443 1460,1514 1531,1548`);
    const bandsLate = hi(`0,16 51,157 174,211 367,385 421,473 490,527 544,561 578,595 612,649 701,720 772,860 877,914 948,982 1000,1036
        1053,1071 1088,1142 1193,1213 1264,1281 1298,1318 1335,1370 1387,1404 1441,1492`);
    const band = (a, b, ox, c) => rect(Math.round(ox + a / 2.45), 786, Math.round((b - a) / 2.45), 68, c);
    let out = grid(785, 854, [821]);
    // both numbers of a pair are x positions here, so undo the vertical scale
    bands.forEach(([x, y]) => out += band(x * 2.45, (y - 670) * 3, 0, '#c0c0fb'));
    bandsLate.forEach(([x, y]) => out += band((x - 640) * 2.45, (y - 670) * 3, 640, '#c0c0fb'));
    out += band(279, 296, 640, '#c06868') + band(296, 316, 640, '#ffa0a0') + band(350, 367, 640, '#68c068');
    out += band(385, 402, 640, '#c06868') + band(402, 421, 640, '#68c068');

    // runs: colour, then points
    const runs = [
        ['#00c800', lo('68,375 90,375 110,395 130,405 150,395 165,375 250,370 275,368 292,388 310,375 340,373 360,375')],
        ['#ff9800', lo('360,375 372,405 383,437')], ['#0000d0', lo('383,437 400,433 415,418')], ['#ff9800', lo('415,418 433,422')],
        ['#0000d0', lo('433,422 452,412')],
        ['#00c800', lo(`452,412 487,390 505,370 520,368 540,372 555,370 575,408 607,375 635,372 660,365 710,376 770,372 785,375 800,370
            820,385 835,385 850,375 885,370 925,365 940,372 960,368 1010,368 1030,380 1045,372 1110,372 1120,380 1135,398 1152,370
            1190,368 1207,380 1225,366 1260,387 1295,382 1312,403 1330,390`)],
        ['#ff9800', lo('1330,390 1347,422')], ['#00c800', lo('1347,422 1365,400 1385,392')], ['#ff9800', lo('1385,392 1400,410 1417,450')],
        ['#0000d0', lo('1417,450 1435,437')], ['#ff9800', lo('1435,437 1452,445')], ['#0000d0', lo('1452,445 1470,423 1488,418')],
        ['#00c800', lo('1488,418 1505,392 1550,396').concat(hi('0,387 42,400 90,390 130,368 145,368 160,376 200,370 215,385'))],
        ['#ff9800', hi('215,385 235,415 270,450')], ['#960000', hi('270,450 285,500 305,518')],
        ['#0000d0', hi('305,518 325,500 345,465 375,450 395,460 430,427')], ['#00c800', hi('430,427 445,410 463,405')],
        ['#ff9800', hi('463,405 482,440')], ['#0000d0', hi('482,440 500,405')],
        ['#00c800', hi(`500,405 518,390 535,393 555,383 570,388 587,366 605,378 625,376 642,366 680,370 750,376 765,393 785,378 830,370
            900,367 925,370 940,385 958,385 975,370 990,397 1010,372 1062,370`)],
        ['#ff9800', hi('1062,370 1080,432')], ['#00c800', hi('1080,432 1097,395 1135,366 1170,368 1187,380 1203,370 1220,380')],
        ['#ff9800', hi('1220,380 1238,412 1255,423')],
        ['#00c800', hi('1255,423 1273,395 1290,393 1305,386 1325,388 1343,366 1378,370 1412,370 1432,383 1450,370 1484,368')]
    ];
    const all = runs.flatMap(r => r[1]).map(([x, y]) => [x, Math.min(y, 806)]);
    out += area([[28, 806], ...all, [LAST, 806]], 'rgba(80,160,80,.5)');
    out += line(28, 791.5, LAST, 791.5, '#000', 1, '5 4') + line(28, 851.5, LAST, 851.5, '#000', 1, '5 4');
    out += line(28, 806.5, LAST, 806.5, NAVY, 2) + line(28, 821.500, LAST, 821.500, NAVY, 2, '5 5') + line(28, 836.5, LAST, 836.5, '#c00020', 2);
    runs.forEach(([c, pts]) => out += poly(pts, c, 3.5));
    out += triangles(hi('270,455 377,455'), false, '#b40000', 6) + triangles(hi('343,455 395,457'), true, '#0000b4', 6);
    out += axis(785, 854) + axisTag(792, '-0,9161', '#00b400', 34) + axisTag(806, '-25', NAVY, 16) + axisTag(821, '-50', NAVY, 16);
    out += axisTag(835, '-75', '#e00000', 16) + axisTag(847, '-100', '#111', 21);
    document.getElementById('willy').innerHTML = out;
}

/* ---------- awesome ---------- */

function drawAwesome() {
    const a = lo(`70,738 135,733 190,737 250,732 330,732 345,728 380,722 420,728 465,731 580,727 640,730 700,727 860,730 925,725
        1000,715 1050,705 1100,692 1135,687 1155,692 1200,683 1245,677 1275,677 1320,687 1360,702 1400,708 1440,722 1487,740 1520,733`)
        .concat(hi(`0,727 45,724 75,726 130,730 170,718 235,705 270,712 300,735 345,762 365,760 395,748 460,735 510,730 560,725
        610,708 660,692 720,680 760,678 835,686 870,675 905,663 940,642 975,630 1060,638 1100,652 1135,654 1155,645 1185,610
        1220,587 1240,588 1270,610 1305,640 1330,640 1370,625 1410,600 1435,585 1450,588 1483,573`));
    const b = lo(`70,736 250,728 300,724 380,726 580,738 860,733 925,722 1000,708 1060,695 1135,690 1155,703 1200,690 1240,685
        1270,705 1320,715 1360,738 1400,738 1435,768 1470,766 1520,740`)
        .concat(hi(`0,725 75,720 130,718 200,698 235,700 270,735 300,775 325,787 345,780 365,765 395,750 430,745 460,720 505,724
        540,710 575,710 620,690 660,682 730,680 760,697 785,708 850,705 900,675 940,652 985,655 1010,670 1030,662 1062,655 1080,680
        1098,715 1130,675 1160,620 1200,615 1220,610 1250,685 1272,708 1300,685 1340,682 1365,640 1415,615 1450,620 1484,597`));
    const base = 916;
    let out = grid(854, 936, [869, 892]);
    for (let x = 31; x <= LAST + 2; x += 7.18) {
        const yb = valueAt(b, x);
        const ya = valueAt(a, x);
        const up = valueAt(b, x + 1) <= valueAt(b, x - 5);
        const down = yb > base;
        const c = down ? (up ? '#209090' : '#ff0000') : (up ? '#0000ff' : '#ff00ff');
        if (ya < yb - 1) {
            const soft = valueAt(a, x) <= valueAt(a, x - 5) ? '#d4f8d4' : '#ffd4d4';
            out += rect(Math.round(x) - 3, Math.round(ya), 3, Math.max(0, Math.min(yb, base) - ya), soft) + rect(Math.round(x) + 1, Math.round(ya), 3, Math.max(0, Math.min(yb, base) - ya), soft);
        }
        out += rect(Math.round(x) - 3, Math.min(yb, base), 5, Math.abs(base - yb), c);
        out += line(Math.round(x) + 2.5, yb, Math.round(x) + 2.5, base, '#000080');
    }
    out += line(28, base + 0.5, LAST + 2, base + 0.5, '#3c3cff', 2);
    out += turning(b, '#000038', '#b400b4', 3) + turning(a, '#60f860', '#ff9800', 3);
    out += triangles(lo('135,737 222,737 310,732 382,725 1100,690').concat(hi('60,728 237,707 395,748 498,730 730,680 1185,610')), false, '#f8f800');
    out += triangles(lo('205,736 240,736 345,728 925,725').concat(hi('45,730 78,730 375,757 448,733 520,720 1150,647')), true, '#00f4f4');
    out += axis(854, 936);
    out += axisTag(861, '11.573', '#60f060', 31) + axisTag(868, '10.199', '#111', 31) + axisTag(875, '10.199', '#0000ff', 31) + axisText(892, '5.000');
    out += axisTag(909, '0', '#0000ff', 8) + axisTag(915, '0', '#0000ff', 8) + axisTag(922, '0', '#0000ff', 8);
    document.getElementById('awesome').innerHTML = out;
}

/* ---------- force bar and years ---------- */

function drawForce() {
    const left = [[70, 91], [108, 159], [230, 424], [529, 617], [811, 1267], [1286, 1374], [1409, 1460]];
    const right = [[122, 140], [174, 350], [473, 510], [632, 666], [701, 737], [755, 826], [843, 877], [914, 1159], [1213, 1298], [1335, 1352], [1423, 1475]];
    let out = rect(29, 937, 1220, 58, '#fffb88');
    left.forEach(([a, b]) => out += rect(Math.round(a / 2.45), 937, Math.round((b - a) / 2.45), 58, '#40ff40'));
    right.forEach(([a, b]) => out += rect(Math.round(640 + a / 2.45), 937, Math.round((b - a) / 2.45), 58, '#40ff40'));
    out += grid(936, 995, [942, 993]) + line(28, 967.5, LAST, 967.5, '#000') + line(28, 995.5, RIGHT, 995.5, '#708a98');
    for (let y = 1984; y <= 2046; y += 2) {
        const x = Math.round(yearX(y));
        out += line(x + 0.5, 995, x + 0.5, 999, '#708a98') + text(x, 1008, y, '#111', '', 'middle');
    }
    out += axis(936, 995) + axisText(942, '0,505') + axisTag(967, '0,5000', '#111', 31) + axisText(991, '0,495');
    document.getElementById('force').innerHTML = out;
}

/* ---------- drawing tools ---------- */

const oval = c => `<ellipse cx="11" cy="10" rx="7" ry="5" fill="${c}" fill-opacity=".3" stroke="${c}" stroke-width="1.500"/><path d="M1 15h4M3 13v4M16 4h4M18 2v4" stroke="#22d"/>`;
const box = c => `<rect x="4" y="5" width="12" height="9" fill="${c}" fill-opacity=".25" stroke="${c}" stroke-width="1.500"/><path d="M1 14h5M3.500 12v5M14 5h5M16.500 2v5" stroke="#22d"/>`;
const bar = c => `<path d="M1 10h18" stroke="${c}" stroke-width="2"/>`;
const slant = c => `<path d="M1 19L19 1" stroke="${c}" stroke-width="1.500"/>`;
const pin = c => `<circle cx="8" cy="10" r="1.500" fill="none" stroke="${c}"/><path d="M10 10h9" stroke="${c}" stroke-width="2"/>`;
const small = (x, y, s, c) => `<text x="${x}" y="${y}" font-size="8" font-weight="bold" fill="${c}">${s}</text>`;
const bell = `<path d="M4 14q3-2 3-6 0-4 3-4t3 4q0 4 3 6z" fill="#f6dc20" stroke="#776000"/><circle cx="10" cy="15.500" r="2" fill="#c8a000"/>`;

const tools = [
    ['Cursor', '<path d="M7 3v12l3-3 2 5 2-1-2-5h4z" fill="#eee" stroke="#555"/>'],
    ['Lupa', '<circle cx="8" cy="8" r="5" fill="#b6c8d0" stroke="#333" stroke-width="1.500"/><path d="M12 12l5 5" stroke="#333" stroke-width="2.500"/>'],
    ['Lupa de zona', '<path d="M2 7h8v9H2z" fill="none" stroke="#22d" stroke-dasharray="2 1"/><circle cx="12" cy="8" r="5" fill="#b6c8d0" stroke="#333" stroke-width="1.500"/><path d="M15 12l4 4" stroke="#333" stroke-width="2.500"/>'],
    ['Alerta en línea', '<path d="M2 3h14" stroke="#111" stroke-width="2"/>' + bell + '<path d="M12 1l4 4 3-4" stroke="#22d" fill="none"/><path d="M13 6v9l2-2 2 4 1-5h2z" fill="#fff" stroke="#888"/>'],
    ['Alerta', bell + '<path d="M3 4q-2 4 0 7M17 4q2 4 0 7" stroke="#777" fill="none"/>'],
    ['Extensión', '<path d="M3 10L6 4l4 9h4" stroke="#111" fill="none" stroke-width="1.500"/><path d="M8 6h9" stroke="#f96" stroke-dasharray="2 1"/><path d="M1 5h4M3 2v5" stroke="#22d"/>' + small(14, 15, 'F', '#00d')],
    ['Retroceso', '<path d="M4 8h10" stroke="#f96" stroke-dasharray="2 1"/><path d="M4 11h10" stroke="#22d" stroke-dasharray="3 1"/>' + small(14, 15, 'F', '#00d')],
    ['Rectángulo azul', box('#6699ff')], ['Rectángulo rojo', box('#ee2222')],
    ['Flecha', '<circle cx="5" cy="15" r="2" fill="none" stroke="#111"/><path d="M6 14l9-8" stroke="#111" stroke-width="2.500"/><path d="M10 4h7v7z"/>'],
    ['Texto', '<rect x="4" y="4" width="12" height="12" rx="2" fill="none" stroke="#6aa0ee"/><path d="M7 7h6M10 7v7" stroke="#222" stroke-width="2"/>'],
    ['Comentario', '<circle cx="10" cy="9" r="7" fill="none" stroke="#6aa0ee"/><path d="M7 6h6M10 6v7" stroke="#187a28" stroke-width="2"/>'],
    ['Segmento', '<g fill="none" stroke="#222"><circle cx="5" cy="15" r="2"/><circle cx="15" cy="5" r="2"/><path d="M6 14l8-8"/></g>'],
    ['Semirrecta verde', pin('#22bb33')], ['Semirrecta roja', pin('#ee1111')],
    ['Regla', '<path d="M3 13L14 3l4 4L7 17z" fill="#a9bcc5" stroke="#555"/><path d="M6 11l2 2M9 8l2 2M12 5l2 2" stroke="#555"/>'],
    ['Zonas', '<path d="M2 3h16v6H2z" fill="#7ab89a"/><path d="M2 11h16v6H2z" fill="#c49aa8"/><path d="M2 14l4-5 3 4 4-6 2 3 3-5" stroke="#7a90e0" fill="none"/>'],
    ['Elipse roja', oval('#ee2222')], ['Elipse marrón', oval('#7a5a20')], ['Elipse verde', oval('#108030')], ['Elipse lima', oval('#22dd33')],
    ['Línea negra', slant('#111')], ['Línea verde', slant('#22aa33')], ['Línea roja', slant('#ee1111')],
    ['Horizontal negra', '<path d="M1 10h18" stroke="#111"/>'], ['Horizontal salmón', bar('#f08878')], ['Horizontal lima', bar('#00f000')],
    ['Horizontal verde', bar('#108010')], ['Horizontal roja', bar('#ff0000')], ['Horizontal azul', bar('#6699ff')], ['Horizontal marino', bar('#0000a0')],
    ['Vertical', '<path d="M10 1v18" stroke="#111"/>'],
    ['Ángulo', '<path d="M18 15H2L15 4" stroke="#e05050" fill="none"/><path d="M8 10q4 0 4 5M8 13l2-4 3 3" stroke="#22d" fill="none" stroke-width="1.500"/>' + small(15, 10, 'a', '#22d')],
    ['Círculo', '<circle cx="10" cy="11" r="7" fill="none" stroke="#f08040" stroke-width="1.500"/><path d="M7 11h5M9.500 8v5M14 5h4M16 3v4" stroke="#22d"/>'],
    ['Ondas 12345', small(0, 12, '1', '#22d') + small(5, 8, '3+', '#22d') + small(12, 6, '5+', '#22d') + small(4, 18, '+2', '#22d') + small(12, 14, '+4', '#22d')],
    ['Ondas abc', small(1, 16, 'a+', '#22d') + small(9, 7, '+b', '#22d') + small(12, 18, 'c+', '#22d') + '<path d="M4 3l11 12" stroke="#88b"/>'],
    ['Correcto', '<path d="M2 11l3-2 3 3 8-9 2 2L8 17z" fill="#2fb83f" stroke="#187a28"/>'],
    ['Me gusta', '<path d="M2 10h4v7H2zM7 10l4-3V2h2q2 3 0 6h5l-1 9H7z" fill="#35c048" stroke="#187a28"/>'],
    ['Error', '<path d="M4 4l12 12M16 4L4 16" stroke="#a00" stroke-width="6"/><path d="M4 4l12 12M16 4L4 16" stroke="#f01010" stroke-width="4"/>'],
    ['Aviso', '<path d="M10 2l8 15H2z" fill="#f8a828" stroke="#c07010"/><path d="M10 7v5M10 13.500v2" stroke="#222" stroke-width="2"/>'],
    ['Subida', '<path d="M10 3l6 6h-3v8H7V9H4z" fill="#22a038" stroke="#187028"/>'],
    ['Bajada', '<path d="M10 17l6-6h-3V5H7v6H4z" fill="#e82020"/>']
];

document.getElementById('tools').innerHTML = tools.map(([name, art]) =>
    `<button aria-label="${name}" title="${name}"><svg width="20" height="20" viewBox="0 0 20 20">${art}</svg></button>`).join('');

drawPrice();
drawTrains();
drawWilly();
drawAwesome();
drawForce();
```
